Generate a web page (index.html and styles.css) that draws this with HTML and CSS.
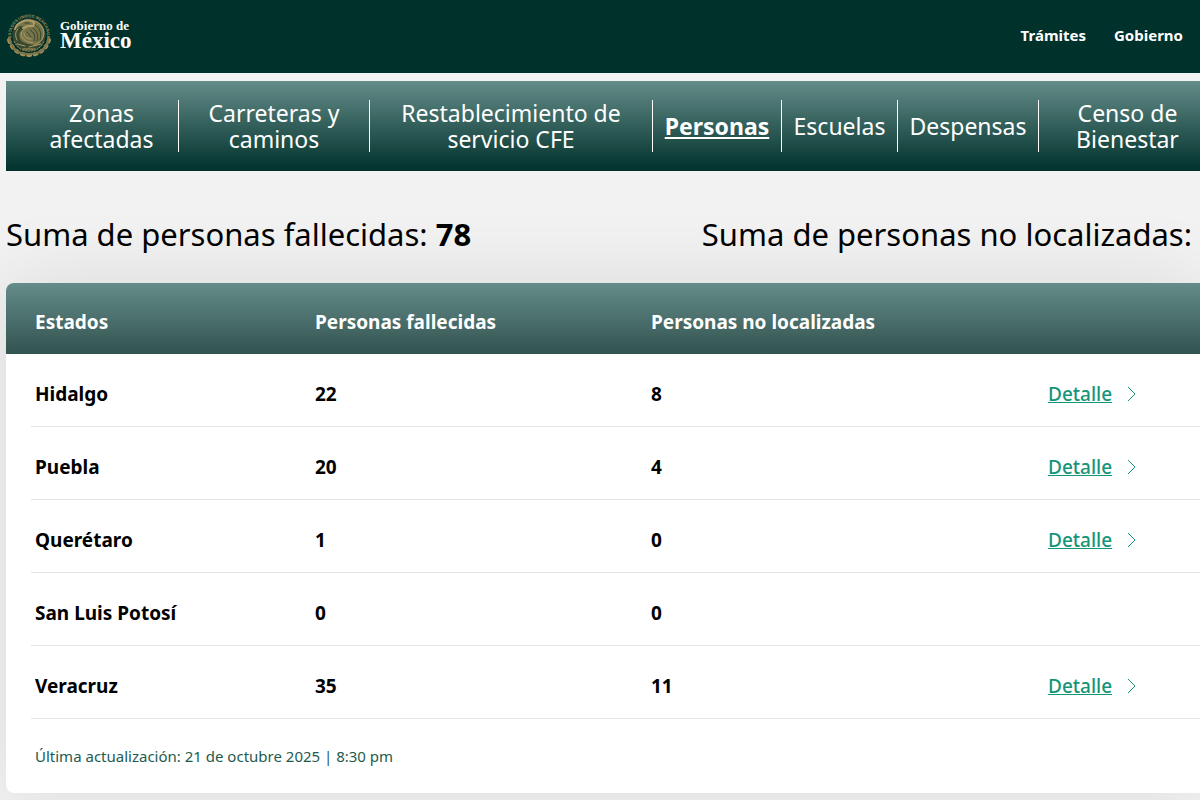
FILE: index.html
```html
<!DOCTYPE html>
<html lang="es">

<head>
    <meta charset="UTF-8">
    <meta name="viewport" content="width=device-width, initial-scale=1.0">
    <title>Personas - Gobierno de México</title>
    <link rel="stylesheet" href="styles.css">
</head>

<body>
    <header class="topbar">
        <a class="brand" href="#">
            <svg class="seal" viewBox="0 0 46 46" aria-hidden="true">
                <defs>
                    <path id="sealArc" d="M5.500 27.500A18 18 0 1 1 40.500 27.500" />
                </defs>
                <circle cx="23" cy="23" r="16.500" fill="#37482f" />
                <!-- legend -->
                <text class="seal-text"><textPath href="#sealArc" startOffset="50%" text-anchor="middle">ESTADOS UNIDOS MEXICANOS</textPath></text>
                <!-- wreath -->
                <path d="M3 28C6 38 14 43 23 43S40 38 43 28" fill="none" stroke="#a4905a" stroke-width="4" stroke-linecap="round" stroke-dasharray="2 4.500" />
                <path d="M3 25C5 38 14 42 23 42S41 38 43 25" fill="none" stroke="#7d7548" stroke-width="2" />
                <path d="M8 29C11 36 16 39 23 39S35 36 38 29" fill="none" stroke="#a4905a" stroke-dasharray="2 1" />
                <!-- eagle -->
                <path d="M10 17C12 10 20 7 26 8C34 9 39 16 38 24C36 31 30 34 22 32C14 30 12 25 14 20L20 15L14 14Z" fill="#77744a" />
                <g fill="none" stroke="#b09c66" stroke-linecap="round">
                    <path d="M9 17C11 10 20 7 26 9C28 10 29 12 27 14L22 14L17 16" stroke-width="2" />
                    <path d="M27 9C33 9 38 15 38 22C37 28 33 32 28 33" />
                    <path d="M21 15C16 18 14 21 16 25C18 29 22 30 27 31" />
                    <path d="M12 17C9 20 9 24 11 28M18 21C18 25 21 27 25 27M11 32L19 34M23 35L35 32M17 37L29 37" />
                </g>
                <path d="M29 13C34 16 36 21 34 28M27 16C31 19 33 24 31 29M24 18C28 20 30 24 28 29M21 20L25 25M19 11L23 11" fill="none" stroke="#33452e" stroke-linecap="round" />
            </svg>
            <span class="brand-name">Gobierno de <strong>México</strong></span>
        </a>
        <nav class="topbar-links">
            <a href="#">Trámites</a>
            <a href="#">Gobierno</a>
        </nav>
    </header>

    <main class="content">
        <nav class="tabs">
            <a href="#">Zonas afectadas</a>
            <a href="#">Carreteras y caminos</a>
            <a href="#">Restablecimiento de servicio CFE</a>
            <a href="#" class="active" aria-current="page">Personas</a>
            <a href="#">Escuelas</a>
            <a href="#">Despensas</a>
            <a href="#">Censo de Bienestar</a>
        </nav>

        <div class="totals">
            <p>Suma de personas fallecidas: <strong>78</strong></p>
            <p>Suma de personas no localizadas:</p>
        </div>

        <section class="card">
            <table>
                <thead>
                    <tr>
                        <th class="col-state" scope="col">Estados</th>
                        <th class="col-dead" scope="col">Personas fallecidas</th>
                        <th class="col-missing" scope="col">Personas no localizadas</th>
                        <td class="col-detail"></td>
                    </tr>
                </thead>
                <tbody>
                    <tr>
                        <th scope="row">Hidalgo</th>
                        <td>22</td>
                        <td>8</td>
                        <td><a class="detail" href="#"><span>Detalle</span><svg viewBox="0 0 10 16" aria-hidden="true"><path d="M1 1l7 7-7 7" /></svg></a></td>
                    </tr>
                    <tr>
                        <th scope="row">Puebla</th>
                        <td>20</td>
                        <td>4</td>
                        <td><a class="detail" href="#"><span>Detalle</span><svg viewBox="0 0 10 16" aria-hidden="true"><path d="M1 1l7 7-7 7" /></svg></a></td>
                    </tr>
                    <tr>
                        <th scope="row">Querétaro</th>
                        <td>1</td>
                        <td>0</td>
                        <td><a class="detail" href="#"><span>Detalle</span><svg viewBox="0 0 10 16" aria-hidden="true"><path d="M1 1l7 7-7 7" /></svg></a></td>
                    </tr>
                    <tr>
                        <th scope="row">San Luis Potosí</th>
                        <td>0</td>
                        <td>0</td>
                        <td></td>
                    </tr>
                    <tr>
                        <th scope="row">Veracruz</th>
                        <td>35</td>
                        <td>11</td>
                        <td><a class="detail" href="#"><span>Detalle</span><svg viewBox="0 0 10 16" aria-hidden="true"><path d="M1 1l7 7-7 7" /></svg></a></td>
                    </tr>
                </tbody>
            </table>
            <p class="updated">Última actualización: 21 de octubre 2025 | 8:30 pm</p>
        </section>
    </main>
</body>

</html>
```

FILE: styles.css
```css
* {
    box-sizing: border-box;
}

body {
    margin: 0;
    background: #f2f2f2;
    color: #000;
    font-family: "Noto Sans", sans-serif;
    overflow-x: hidden;
}

a {
    color: inherit;
    text-decoration: none;
}

p {
    margin: 0;
}

/* top bar */
.topbar {
    display: flex;
    align-items: center;
    justify-content: space-between;
    padding: 12px 17px 15px 6px;
    background: #00312b;
    color: #fff;
}

.brand {
    display: flex;
    align-items: center;
    gap: 8px;
}

.seal {
    width: 46px;
    height: 46px;
}

.seal-text {
    fill: #a4905a;
    font-family: "Liberation Sans", sans-serif;
    font-size: 4px;
    font-weight: bold;
}

.brand-name {
    font-family: "Liberation Serif", serif;
    font-size: 13px;
    font-weight: bold;
    line-height: 12px;
}

.brand-name strong {
    display: block;
    font-size: 23px;
    line-height: 18px;
}

.topbar-links {
    display: flex;
    gap: 28px;
    font-size: 15px;
    font-weight: bold;
}

/* section tabs */
.content {
    padding: 8px 0 24px 6px;
}

.tabs {
    display: grid;
    grid-template-columns: 173fr 191fr 283fr 129fr 116fr 141fr 161fr;
    padding: 19px 0;
    background: linear-gradient(#648c89, #00312b);
    color: #fff;
    font-size: 23px;
    line-height: 26px;
    text-align: center;
}

.tabs a {
    display: flex;
    align-items: center;
    justify-content: center;
    min-height: 52px;
    padding: 0 11px;
    border-right: 1px solid #fff;
}

.tabs a:first-child {
    padding-left: 30px;
}

.tabs a:last-child {
    padding: 0 16px 0 32px;
    border-right: 0;
}

.tabs .active {
    font-weight: bold;
    text-decoration: underline;
}

/* totals */
.totals {
    display: flex;
    justify-content: space-between;
    padding: 41px 8px 27px 0;
    font-size: 31px;
    line-height: 44px;
}

/* table card */
.card {
    overflow: hidden;
    border-radius: 8px 0 0 8px;
    background: #fff;
    box-shadow: 0 0 80px rgba(0, 0, 0, 0.1);
}

table {
    width: 100%;
    border-collapse: collapse;
    table-layout: fixed;
    font-size: 19px;
    font-weight: bold;
    line-height: 28px;
    text-align: left;
}

.col-state {
    width: 309px;
}

.col-dead {
    width: 336px;
}

.col-missing {
    width: 397px;
}

.col-detail {
    width: 152px;
}

th,
td {
    padding: 26px 0 19px;
}

th:first-child {
    padding-left: 29px;
}

thead {
    background: linear-gradient(#648c89, #325350);
    color: #fff;
}

thead th,
thead td {
    padding: 25px 0 18px;
}

/* separator starts at the text, not at the card edge */
tbody th,
tbody td {
    background: linear-gradient(#e4e4e4, #e4e4e4) no-repeat 0 100% / 100% 1px;
}

tbody th {
    background-position-x: 25px;
}

.detail {
    display: flex;
    align-items: center;
    gap: 15px;
    color: #149578;
    font-size: 19px;
    font-weight: 500;
}

.detail span {
    text-decoration: underline;
}

.detail svg {
    width: 10px;
    height: 16px;
    fill: none;
    stroke: currentColor;
}

.updated {
    padding: 25px 29px;
    color: #1e5b4f;
    font-size: 15px;
    line-height: 24px;
}
```
